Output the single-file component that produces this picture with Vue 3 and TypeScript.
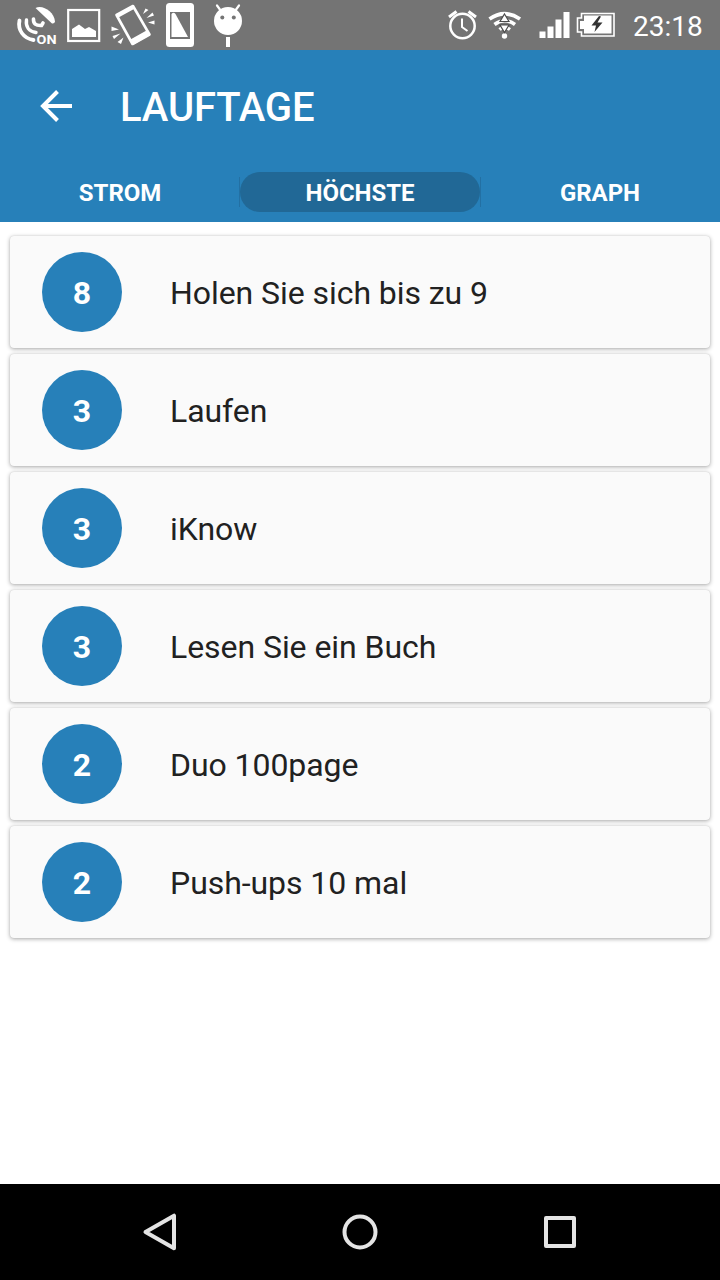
<script setup lang="ts">
import { ref } from 'vue'

interface Streak {
  days: number
  name: string
}

const tabs: string[] = ['STROM', 'HÖCHSTE', 'GRAPH']
const activeTab = ref<string>('HÖCHSTE')

const streaks: Streak[] = [
  { days: 8, name: 'Holen Sie sich bis zu 9' },
  { days: 3, name: 'Laufen' },
  { days: 3, name: 'iKnow' },
  { days: 3, name: 'Lesen Sie ein Buch' },
  { days: 2, name: 'Duo 100page' },
  { days: 2, name: 'Push-ups 10 mal' },
]
</script>

<template>
  <div class="screen">
    <div class="status">
      <div class="group">
        <svg width="48" height="50" viewBox="12 0 48 50" fill="none" stroke="#fff" stroke-linecap="round">
          <path d="M35.500 8C43 4.500 54 12 55 21.500Q54.500 24 52 23.500Z" fill="#fff" stroke="none" />
          <path d="M33.500 19Q33 26 41.500 25.500L43 23" stroke-width="3.600" />
          <path d="M26.500 20C25.500 27 29 31.500 36 32.500" stroke-width="3.400" />
          <path d="M19.500 20.500C17.500 30 23.500 38.500 33.500 40" stroke-width="3.800" />
          <text x="36.500" y="44" class="on" textLength="20" lengthAdjust="spacingAndGlyphs">ON</text>
        </svg>
        <svg width="48" height="50" viewBox="60 0 48 50">
          <rect x="68.200" y="10" width="31" height="31" fill="none" stroke="#fff" stroke-width="2.200" />
          <path d="M72 37V29L79 24.500L85 29L89 27L96 31V37Z" fill="#fff" />
        </svg>
        <svg width="48" height="50" viewBox="108 0 48 50" fill="none" stroke="#fff">
          <path d="M116.500 15L133 6L149.500 34.500L132.500 44Z" stroke-width="2.600" stroke-linejoin="round" />
          <path d="M116 15L133 5.500L134 9L118.500 17.500ZM129.500 40L146.500 30.500L150 35L133 45Z" fill="#fff" stroke="none" />
          <path d="M143 14L145.500 8.500L148.500 10ZM146.500 18L152.500 12.500L154 15.500ZM148 22.500L154.500 20.500V24.500ZM119 29.500L111.500 26.500V31ZM120.500 33.500L112.500 36L114 39ZM123.500 37.500L117.500 42L121 44Z" fill="#fff" stroke="none" />
        </svg>
        <svg width="48" height="50" viewBox="156 0 48 50">
          <rect x="166" y="3" width="28" height="44" rx="3.500" fill="#fff" />
          <path d="M170 12H190V39H170Z" fill="#747474" />
          <path d="M171.500 14Q173.500 11.500 175.500 14L188 37H171.500Z" fill="#fff" />
        </svg>
        <svg width="48" height="50" viewBox="204 0 48 50">
          <circle cx="228" cy="21" r="14" fill="#fff" />
          <path d="M217 5.500L221 11M239 5.500L235 11" stroke="#fff" stroke-width="2.200" stroke-linecap="round" />
          <circle cx="222.300" cy="17.500" r="2" fill="#747474" />
          <circle cx="233.800" cy="17.500" r="2" fill="#747474" />
          <rect x="226" y="37" width="4" height="10" fill="#fff" />
        </svg>
      </div>
      <div class="group">
        <svg width="40" height="50" viewBox="444 0 40 50" fill="none" stroke="#fff">
          <circle cx="462.500" cy="26" r="12.200" stroke-width="2.500" />
          <path d="M462 18.500V27L467.500 31" stroke-width="2" />
          <path d="M449 17L456.500 11.500M468.500 11.500L476 17" stroke-width="3" />
        </svg>
        <svg width="44" height="50" viewBox="484 0 44 50" fill="none" stroke="#fff">
          <path d="M489.500 19Q504.500 8.500 520 19" stroke-width="3.800" />
          <path d="M494.500 24.500Q504.500 17 515 24.500" stroke-width="3.600" />
          <path d="M499.500 29.500Q504.500 25.500 510 29.500" stroke-width="3.400" />
          <circle cx="504.500" cy="36" r="2.700" fill="#fff" stroke="none" />
          <path d="M504.500 14L509 21.500H500ZM504.500 32.500L509 25H500Z" fill="#fff" stroke="#4c4c4c" stroke-width="1.200" />
        </svg>
        <svg width="44" height="50" viewBox="528 0 44 50" fill="#fff">
          <path d="M539.500 31.500h6v6.500h-6zM547.500 26.500h6v11.500h-6zM555.500 19.500h6v18.500h-6zM563.500 12h6v26h-6z" />
        </svg>
        <svg width="62" height="50" viewBox="572 0 62 50">
          <path d="M581.500 13.500H614V36H581.500V32H577.500V18H581.500Z" fill="none" stroke="#fff" stroke-width="1.600" />
          <path d="M584 15.500H611.500V33.500H584V29H580V21H584Z" fill="#fff" />
          <path d="M599 16L591.500 25.500H596L594.500 32L602.500 22.500H597.500L601 16.500Z" fill="#333" />
        </svg>
        <span class="clock">23:18</span>
      </div>
    </div>

    <header class="header">
      <div class="toolbar">
        <svg class="back" width="32" height="32" viewBox="0 0 32 32" fill="none" stroke="#fff" stroke-width="4">
          <path d="M32 16H4M17.500 1.500L3 16L17.500 30.500" />
        </svg>
        <h1>LAUFTAGE</h1>
      </div>
      <nav class="tabs">
        <button
          v-for="tab in tabs"
          :key="tab"
          :class="['tab', { active: tab === activeTab }]"
          @click="activeTab = tab"
        >{{ tab }}</button>
      </nav>
    </header>

    <main class="list">
      <article v-for="streak in streaks" :key="streak.name" class="card">
        <span class="days">{{ streak.days }}</span>
        <span class="name">{{ streak.name }}</span>
      </article>
    </main>

    <footer class="navbar">
      <svg width="40" height="40" viewBox="0 0 40 40" class="nav-icon"><path d="M5.500 20L34 3.700V36.300Z" /></svg>
      <svg width="40" height="40" viewBox="0 0 40 40" class="nav-icon"><circle cx="20" cy="20" r="15.500" /></svg>
      <svg width="40" height="40" viewBox="0 0 40 40" class="nav-icon"><rect x="6" y="6" width="28" height="28" /></svg>
    </footer>
  </div>
</template>

<style>
body {
  margin: 0;
}
</style>

<style scoped>
.screen {
  width: 720px;
  height: 1280px;
  display: flex;
  flex-direction: column;
  background: #fff;
  font-family: Roboto, sans-serif;
  overflow: hidden;
}
.status {
  height: 50px;
  padding: 0 17px 0 12px;
  display: flex;
  justify-content: space-between;
  background: #747474;
  color: #fff;
}
.group {
  display: flex;
  align-items: center;
}
.group:last-child {
  margin-right: -1px;
}
.on {
  fill: #fff;
  stroke: none;
  font-size: 12.5px;
  font-weight: 700;
}
.clock {
  width: 71px;
  margin-left: -1px;
  font-size: 28px;
  line-height: 50px;
  padding-top: 3px;
}
.header {
  height: 172px;
  background: #2780b9;
  color: #fff;
}
.toolbar {
  height: 112px;
  padding-left: 40px;
  display: flex;
  align-items: center;
}
h1 {
  margin: 4px 0 0 48px;
  font-size: 40px;
  line-height: 48px;
  font-weight: 500;
  letter-spacing: -0.12px;
}
.tabs {
  display: flex;
  padding-top: 10px;
}
.tab {
  flex: 1;
  height: 40px;
  padding: 3px 0 0;
  border: 0;
  border-radius: 20px;
  background: transparent;
  color: #fff;
  font: 700 24px/37px Roboto, sans-serif;
  letter-spacing: -0.05px;
}
.tab.active {
  position: relative;
  background: #216896;
}
.tab.active::before,
.tab.active::after {
  content: '';
  position: absolute;
  top: 5px;
  width: 1px;
  height: 30px;
  background: #2370a3;
}
.tab.active::before {
  left: -1px;
}
.tab.active::after {
  right: -1px;
}
.list {
  flex: 1;
  padding: 14px 10px 0;
  display: flex;
  flex-direction: column;
  gap: 6px;
}
.card {
  height: 112px;
  padding-left: 32px;
  box-sizing: border-box;
  display: flex;
  align-items: center;
  gap: 48px;
  border-radius: 4px;
  background: #fafafa;
  box-shadow: 0 1px 4px rgba(0, 0, 0, 0.34), 0 0 1px rgba(0, 0, 0, 0.14);
}
.days {
  width: 80px;
  height: 80px;
  border-radius: 50%;
  background: #2780b9;
  color: #fff;
  font-size: 32px;
  line-height: 82px;
  font-weight: 700;
  text-align: center;
}
.name {
  color: #212121;
  font-size: 32px;
  line-height: 40px;
  padding-top: 2px;
  letter-spacing: -0.06px;
}
.navbar {
  height: 96px;
  padding: 0 60px;
  display: flex;
  justify-content: space-around;
  align-items: center;
  background: #000;
}
.nav-icon {
  fill: none;
  stroke: #e4e4e4;
  stroke-width: 4;
  stroke-linejoin: round;
}
</style>
